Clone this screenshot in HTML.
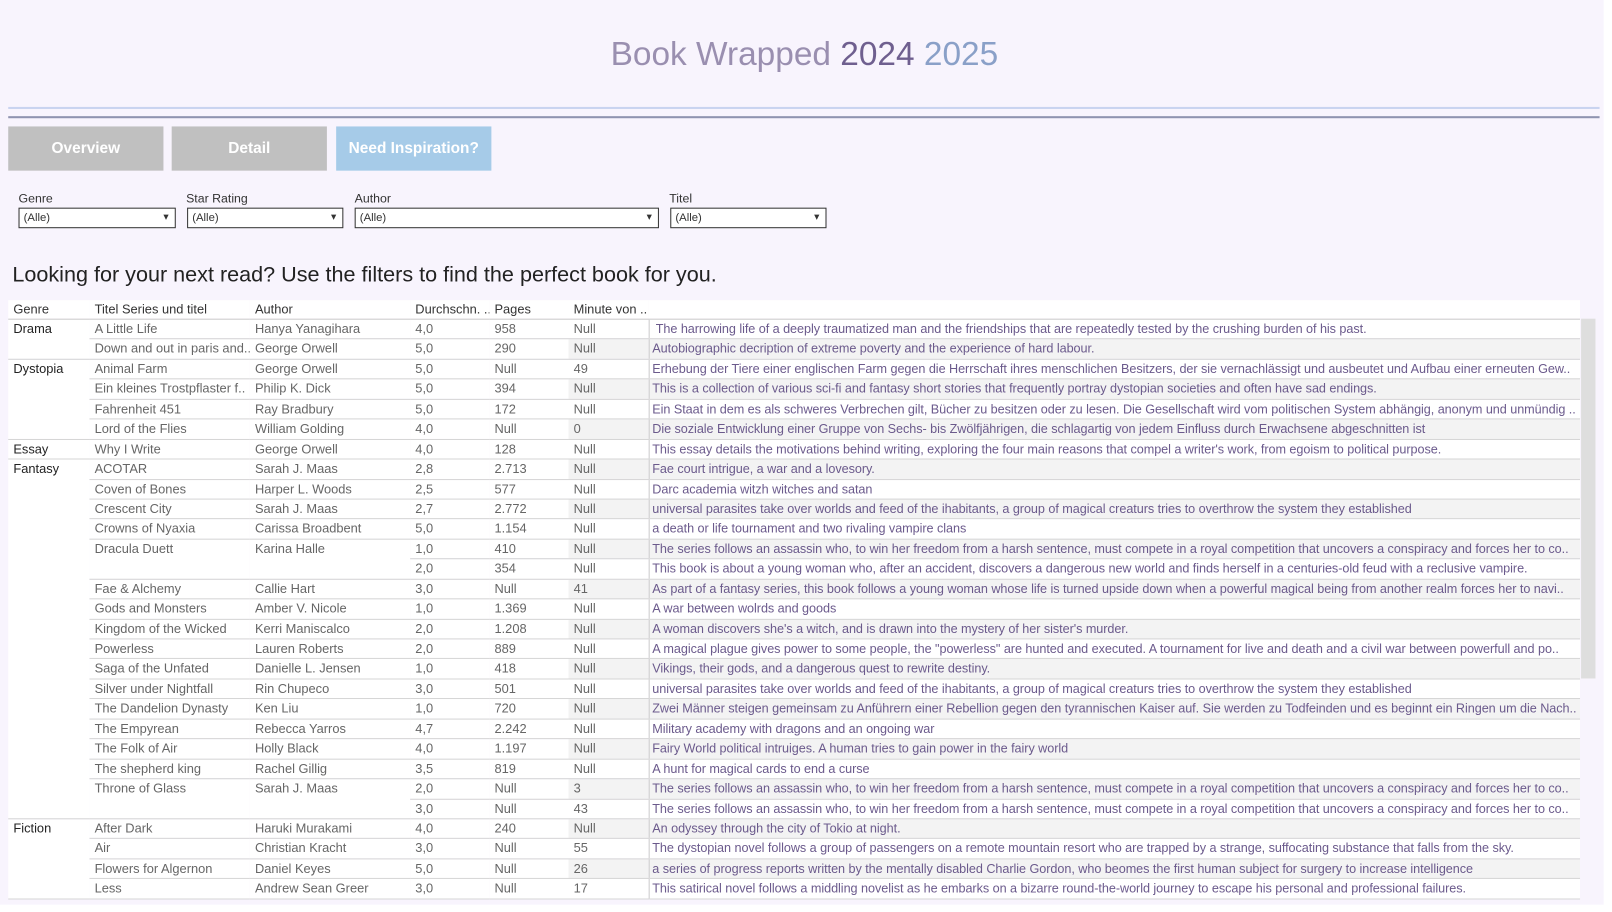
<!DOCTYPE html>
<html><head><meta charset="utf-8"><style>
*{margin:0;padding:0;box-sizing:border-box}
body{width:1612px;height:912px;background:#fff;font-family:"Liberation Sans",sans-serif;position:relative;overflow:hidden}
#wrap{position:absolute;left:0;top:0;width:1568px;height:887px;transform:scale(1.028);transform-origin:0 0}
#bg{position:absolute;left:0;top:0;width:1560px;height:880px;background:#f8f4fd}
.abs{position:absolute}
.title{left:0;width:1565px;top:34px;text-align:center;font-size:32.5px;color:#9a8fb0}
.btn{top:123px;height:43px;color:#fff;font-weight:bold;font-size:15px;text-align:center;line-height:43px}
.lab{top:186px;font-size:12px;color:#333}
.sel{top:202px;height:20px;border:1px solid #333;background:#fff;font-size:11px;color:#333;padding-left:4px;line-height:18px}
.sel:after{content:"▾";position:absolute;right:6px;top:0;font-size:10px}
table{position:absolute;left:8px;top:292px;width:1529px;border-collapse:collapse;table-layout:fixed;font-size:12.5px;color:#666}
td,th{height:19.45px;padding:0 0 0 5px;white-space:nowrap;overflow:hidden;text-overflow:clip;border-bottom:1px solid #d6d6d6;vertical-align:top;line-height:18px}
th{font-weight:normal;color:#333;text-align:left;border-bottom:1px solid #ccc;background:#fff;height:18px}
td.g{color:#222}
td.d{color:#6b5a8c;border-left:1px solid #ccc;padding-left:3px;font-size:12.3px;letter-spacing:-0.05px}
td{background:#fff}
tr.alt td.m,tr.alt td.d{background:#f3f3f3}
</style></head><body><div id="wrap">
<div id="bg"></div>
<div class="abs title">Book Wrapped <span style="color:#6f5f8f">2024</span> <span style="color:#8aa0c8">2025</span></div>
<div class="abs" style="left:8px;top:104px;width:1548px;height:2px;background:#c9d3f0"></div>
<div class="abs" style="left:8px;top:113px;width:1548px;height:2px;background:#8f93b0"></div>
<div class="abs btn" style="left:8px;width:151px;background:#c0c0c0">Overview</div>
<div class="abs btn" style="left:167px;width:151px;background:#c0c0c0">Detail</div>
<div class="abs btn" style="left:327px;width:151px;background:#a6cbe8">Need Inspiration?</div>
<div class="abs lab" style="left:18px">Genre</div>
<div class="abs lab" style="left:181px">Star Rating</div>
<div class="abs lab" style="left:345px">Author</div>
<div class="abs lab" style="left:651px">Titel</div>
<div class="abs sel" style="left:18px;width:153px">(Alle)</div>
<div class="abs sel" style="left:182px;width:152px">(Alle)</div>
<div class="abs sel" style="left:345px;width:296px">(Alle)</div>
<div class="abs sel" style="left:652px;width:152px">(Alle)</div>
<div class="abs" style="left:12px;top:256px;font-size:21px;color:#222">Looking for your next read? Use the filters to find the perfect book for you.</div>
<div class="abs" style="left:1538px;top:310px;width:14px;height:350px;background:#dedede"></div>
<table>
<colgroup><col style="width:79px"><col style="width:156px"><col style="width:156px"><col style="width:77px"><col style="width:77px"><col style="width:78px"><col style="width:906px"></colgroup>
<tr><th>Genre</th><th>Titel Series und titel</th><th>Author</th><th>Durchschn. ..</th><th>Pages</th><th>Minute von ..</th><th></th></tr>
<tr><td class="g" rowspan="2">Drama</td><td>A Little Life</td><td>Hanya Yanagihara</td><td>4,0</td><td>958</td><td class="m">Null</td><td class="d">&nbsp;The harrowing life of a deeply traumatized man and the friendships that are repeatedly tested by the crushing burden of his past.</td></tr>
<tr class="alt"><td>Down and out in paris and..</td><td>George Orwell</td><td>5,0</td><td>290</td><td class="m">Null</td><td class="d">Autobiographic decription of extreme poverty and the experience of hard labour.</td></tr>
<tr><td class="g" rowspan="4">Dystopia</td><td>Animal Farm</td><td>George Orwell</td><td>5,0</td><td>Null</td><td class="m">49</td><td class="d">Erhebung der Tiere einer englischen Farm gegen die Herrschaft ihres menschlichen Besitzers, der sie vernachlässigt und ausbeutet und Aufbau einer erneuten Gew..</td></tr>
<tr class="alt"><td>Ein kleines Trostpflaster f..</td><td>Philip K. Dick</td><td>5,0</td><td>394</td><td class="m">Null</td><td class="d">This is a collection of various sci-fi and fantasy short stories that frequently portray dystopian societies and often have sad endings.</td></tr>
<tr><td>Fahrenheit 451</td><td>Ray Bradbury</td><td>5,0</td><td>172</td><td class="m">Null</td><td class="d">Ein Staat in dem es als schweres Verbrechen gilt, Bücher zu besitzen oder zu lesen. Die Gesellschaft wird vom politischen System abhängig, anonym und unmündig ..</td></tr>
<tr class="alt"><td>Lord of the Flies</td><td>William Golding</td><td>4,0</td><td>Null</td><td class="m">0</td><td class="d">Die soziale Entwicklung einer Gruppe von Sechs- bis Zwölfjährigen, die schlagartig von jedem Einfluss durch Erwachsene abgeschnitten ist</td></tr>
<tr><td class="g">Essay</td><td>Why I Write</td><td>George Orwell</td><td>4,0</td><td>128</td><td class="m">Null</td><td class="d">This essay details the motivations behind writing, exploring the four main reasons that compel a writer's work, from egoism to political purpose.</td></tr>
<tr class="alt"><td class="g" rowspan="18">Fantasy</td><td>ACOTAR</td><td>Sarah J. Maas</td><td>2,8</td><td>2.713</td><td class="m">Null</td><td class="d">Fae court intrigue, a war and a lovesory.</td></tr>
<tr><td>Coven of Bones</td><td>Harper L. Woods</td><td>2,5</td><td>577</td><td class="m">Null</td><td class="d">Darc academia witzh witches and satan</td></tr>
<tr class="alt"><td>Crescent City</td><td>Sarah J. Maas</td><td>2,7</td><td>2.772</td><td class="m">Null</td><td class="d">universal parasites take over worlds and feed of the ihabitants, a group of magical creaturs tries to overthrow the system they established</td></tr>
<tr><td>Crowns of Nyaxia</td><td>Carissa Broadbent</td><td>5,0</td><td>1.154</td><td class="m">Null</td><td class="d">a death or life tournament and two rivaling vampire clans</td></tr>
<tr class="alt"><td rowspan="2" style="background:#fff">Dracula Duett</td><td rowspan="2" style="background:#fff">Karina Halle</td><td>1,0</td><td>410</td><td class="m">Null</td><td class="d">The series follows an assassin who, to win her freedom from a harsh sentence, must compete in a royal competition that uncovers a conspiracy and forces her to co..</td></tr>
<tr><td>2,0</td><td>354</td><td class="m">Null</td><td class="d">This book is about a young woman who, after an accident, discovers a dangerous new world and finds herself in a centuries-old feud with a reclusive vampire.</td></tr>
<tr class="alt"><td>Fae &amp; Alchemy</td><td>Callie Hart</td><td>3,0</td><td>Null</td><td class="m">41</td><td class="d">As part of a fantasy series, this book follows a young woman whose life is turned upside down when a powerful magical being from another realm forces her to navi..</td></tr>
<tr><td>Gods and Monsters</td><td>Amber V. Nicole</td><td>1,0</td><td>1.369</td><td class="m">Null</td><td class="d">A war between wolrds and goods</td></tr>
<tr class="alt"><td>Kingdom of the Wicked</td><td>Kerri Maniscalco</td><td>2,0</td><td>1.208</td><td class="m">Null</td><td class="d">A woman discovers she's a witch, and is drawn into the mystery of her sister's murder.</td></tr>
<tr><td>Powerless</td><td>Lauren Roberts</td><td>2,0</td><td>889</td><td class="m">Null</td><td class="d">A magical plague gives power to some people, the "powerless" are hunted and executed. A tournament for live and death and a civil war between powerfull and po..</td></tr>
<tr class="alt"><td>Saga of the Unfated</td><td>Danielle L. Jensen</td><td>1,0</td><td>418</td><td class="m">Null</td><td class="d">Vikings, their gods, and a dangerous quest to rewrite destiny.</td></tr>
<tr><td>Silver under Nightfall</td><td>Rin Chupeco</td><td>3,0</td><td>501</td><td class="m">Null</td><td class="d">universal parasites take over worlds and feed of the ihabitants, a group of magical creaturs tries to overthrow the system they established</td></tr>
<tr class="alt"><td>The Dandelion Dynasty</td><td>Ken Liu</td><td>1,0</td><td>720</td><td class="m">Null</td><td class="d">Zwei Männer steigen gemeinsam zu Anführern einer Rebellion gegen den tyrannischen Kaiser auf. Sie werden zu Todfeinden und es beginnt ein Ringen um die Nach..</td></tr>
<tr><td>The Empyrean</td><td>Rebecca Yarros</td><td>4,7</td><td>2.242</td><td class="m">Null</td><td class="d">Military academy with dragons and an ongoing war</td></tr>
<tr class="alt"><td>The Folk of Air</td><td>Holly Black</td><td>4,0</td><td>1.197</td><td class="m">Null</td><td class="d">Fairy World political intruiges. A human tries to gain power in the fairy world</td></tr>
<tr><td>The shepherd king</td><td>Rachel Gillig</td><td>3,5</td><td>819</td><td class="m">Null</td><td class="d">A hunt for magical cards to end a curse</td></tr>
<tr class="alt"><td rowspan="2" style="background:#fff">Throne of Glass</td><td rowspan="2" style="background:#fff">Sarah J. Maas</td><td>2,0</td><td>Null</td><td class="m">3</td><td class="d">The series follows an assassin who, to win her freedom from a harsh sentence, must compete in a royal competition that uncovers a conspiracy and forces her to co..</td></tr>
<tr><td>3,0</td><td>Null</td><td class="m">43</td><td class="d">The series follows an assassin who, to win her freedom from a harsh sentence, must compete in a royal competition that uncovers a conspiracy and forces her to co..</td></tr>
<tr class="alt"><td class="g" rowspan="4" style="background:#fff">Fiction</td><td>After Dark</td><td>Haruki Murakami</td><td>4,0</td><td>240</td><td class="m">Null</td><td class="d">An odyssey through the city of Tokio at night.</td></tr>
<tr><td>Air</td><td>Christian Kracht</td><td>3,0</td><td>Null</td><td class="m">55</td><td class="d">The dystopian novel follows a group of passengers on a remote mountain resort who are trapped by a strange, suffocating substance that falls from the sky.</td></tr>
<tr class="alt"><td>Flowers for Algernon</td><td>Daniel Keyes</td><td>5,0</td><td>Null</td><td class="m">26</td><td class="d">a series of progress reports written by the mentally disabled Charlie Gordon, who beomes the first human subject for surgery to increase intelligence</td></tr>
<tr><td>Less</td><td>Andrew Sean Greer</td><td>3,0</td><td>Null</td><td class="m">17</td><td class="d">This satirical novel follows a middling novelist as he embarks on a bizarre round-the-world journey to escape his personal and professional failures.</td></tr>
</table>
</div></body></html>
